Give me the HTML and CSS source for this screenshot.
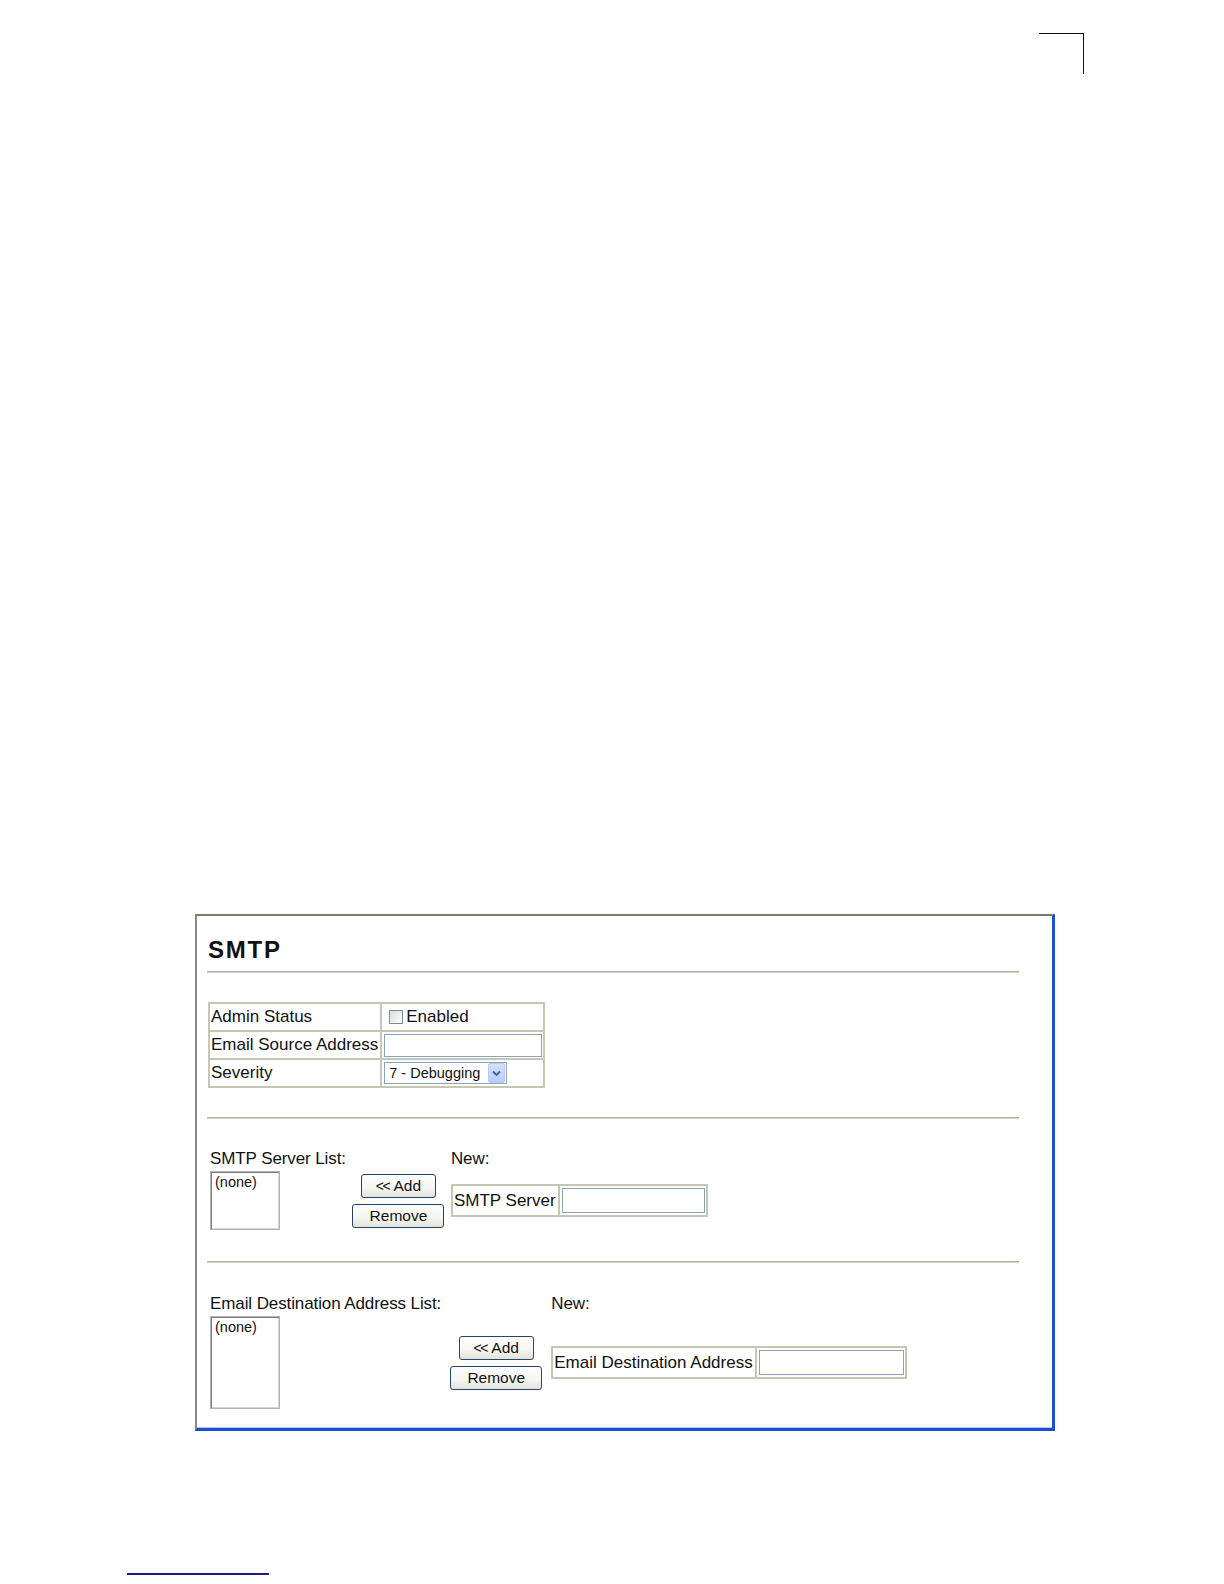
FILE: index.html
```html
<!DOCTYPE html>
<html>
<head>
<meta charset="utf-8">
<title>SMTP</title>
<link rel="stylesheet" href="styles.css">
</head>
<body>
<div class="page">
  <div class="crop-mark"></div>
  <div class="frame">
    <h1 class="title">SMTP</h1>
    <div class="rule"></div>
    <table class="grid settings">
      <tr>
        <td class="label">Admin Status</td>
        <td class="value value-wide"><span class="check"><span class="checkbox"></span>Enabled</span></td>
      </tr>
      <tr>
        <td class="label">Email Source Address</td>
        <td class="value value-wide"><input class="text-input source-input" type="text"></td>
      </tr>
      <tr>
        <td class="label">Severity</td>
        <td class="value value-wide">
          <div class="select">
            <span class="select-text">7 - Debugging</span>
            <span class="select-btn"><svg width="9" height="7" viewBox="0 0 9 7"><path d="M1 1.5 L4.5 5 L8 1.5" fill="none" stroke="#4d6185" stroke-width="1.8"/></svg></span>
          </div>
        </td>
      </tr>
    </table>
    <div class="rule"></div>
    <div class="list-section server">
      <div class="list-label">SMTP Server List:</div>
      <div class="spacer"></div>
      <div class="new-label">New:</div>
      <div class="listbox short">(none)</div>
      <div class="buttons">
        <button class="btn add" type="button"><span class="arrows">&lt;&lt;</span> Add</button>
        <button class="btn remove" type="button">Remove</button>
      </div>
      <table class="grid new-table">
        <tr>
          <td class="label">SMTP Server</td>
          <td class="value"><input class="text-input new-input" type="text"></td>
        </tr>
      </table>
    </div>
    <div class="rule"></div>
    <div class="list-section email">
      <div class="list-label">Email Destination Address List:</div>
      <div class="spacer"></div>
      <div class="new-label">New:</div>
      <div class="listbox tall">(none)</div>
      <div class="buttons">
        <button class="btn add" type="button"><span class="arrows">&lt;&lt;</span> Add</button>
        <button class="btn remove" type="button">Remove</button>
      </div>
      <table class="grid new-table">
        <tr>
          <td class="label">Email Destination Address</td>
          <td class="value"><input class="text-input new-input email-input" type="text"></td>
        </tr>
      </table>
    </div>
  </div>
  <div class="footer-line"></div>
</div>
</body>
</html>
```

FILE: styles.css
```css
html, body {
  margin: 0;
  padding: 0;
  background: #ffffff;
}

body {
  font-family: "Liberation Sans", Arial, sans-serif;
  color: #111111;
}

.page {
  width: 1224px;
  height: 1584px;
  padding-top: 33px;
  box-sizing: border-box;
  overflow: hidden;
}

.crop-mark {
  margin-left: 1039px;
  width: 44px;
  height: 40px;
  border-top: 1px solid #111;
  border-right: 1px solid #111;
}

.frame {
  margin-top: 840px;
  margin-left: 195px;
  box-sizing: content-box;
  padding: 0 0 19px 11px;
  width: 844px;
  border-top: 2px solid #7d7d6e;
  border-left: 2px solid #888888;
  border-right: 3px solid #1a4cd6;
  border-bottom: 3px solid #1a4cd6;
  box-shadow: inset 0 -1px 0 #b3c6f2;
}

.title {
  margin: 23px 0 0 0;
  font-size: 24px;
  line-height: 22px;
  letter-spacing: 1.8px;
  font-weight: bold;
  color: #111;
}

.rule {
  width: 812px;
  height: 1px;
  margin-left: -1px;
  border-top: 1px solid #b4b4a2;
  background: #d2d2c4;
}

.title + .rule {
  margin-top: 10px;
}

.grid {
  border-collapse: separate;
  border-spacing: 0;
  border: 1px solid #c6c6b4;
}

.grid td {
  border: 1px solid #c6c6b4;
  padding: 0 2px 0 1px;
  font-size: 17px;
  line-height: 20px;
  vertical-align: middle;
  white-space: nowrap;
}

.settings {
  margin: 29px 0 29px 0;
}

.settings td {
  height: 26px;
}

.value-wide {
  width: 158px;
}

.grid td.value {
  padding: 0 1px 0 0;
}

.check {
  display: flex;
  align-items: center;
}

.checkbox {
  display: inline-block;
  width: 12px;
  height: 12px;
  margin: 0 3px 0 7px;
  border: 1px solid #7c8c9c;
  background: linear-gradient(135deg, #dcdcd6 0%, #f4f4f2 70%, #ffffff 100%);
}

.text-input {
  display: block;
  box-sizing: border-box;
  margin: 0 0 0 2px;
  padding: 0;
  border: 1px solid #8aa4c0;
  background: #fff;
  font: inherit;
}

.source-input {
  width: 158px;
  height: 23px;
}

.select {
  display: flex;
  align-items: center;
  justify-content: space-between;
  box-sizing: border-box;
  width: 123px;
  height: 22px;
  margin-left: 2px;
  border: 1px solid #8aa4c0;
  padding: 0 1px 0 4px;
  background: #fff;
}

.select-text {
  font-size: 14.5px;
  line-height: 20px;
}

.select-btn {
  display: flex;
  align-items: center;
  justify-content: center;
  box-sizing: border-box;
  width: 17px;
  height: 20px;
  border: 1px solid #b9cbf6;
  border-radius: 2px;
  background: linear-gradient(#d3e0fd, #b8ccfb);
}

.list-section {
  display: grid;
  grid-template-columns: auto 105px auto;
  grid-template-rows: 20px auto;
  row-gap: 2px;
  align-items: center;
  justify-items: start;
  justify-content: start;
  margin-left: 1px;
  padding-top: 30px;
}

.list-section.server {
  padding-bottom: 31px;
}

.list-section.email {
  grid-template-columns: auto 110px auto;
  padding-top: 31px;
}

.list-label,
.new-label {
  font-size: 17px;
  line-height: 20px;
  white-space: nowrap;
  letter-spacing: -0.1px;
}

.list-label {
  padding-left: 1px;
}

.listbox {
  box-sizing: border-box;
  width: 70px;
  margin-left: 1px;
  padding: 1px 3px;
  border: 1px solid #b2b2b2;
  box-shadow: inset 1px 1px 0 #7e7e7e, inset -1px -1px 0 #d6d6d6;
  font-size: 14.5px;
  line-height: 16px;
  background: #fff;
}

.listbox.short {
  height: 59px;
  padding-left: 4px;
  padding-top: 2px;
}

.listbox.tall {
  height: 93px;
  padding-left: 4px;
  padding-top: 2px;
}

.buttons {
  justify-self: stretch;
  display: flex;
  flex-direction: column;
  align-items: center;
  gap: 6px;
}

.btn {
  box-sizing: border-box;
  height: 24px;
  padding: 0;
  border: 1px solid #27456c;
  border-radius: 3px;
  background: linear-gradient(#ffffff 0%, #f5f5f1 60%, #e4e2da 100%);
  font-family: "Liberation Sans", Arial, sans-serif;
  font-size: 15.5px;
  line-height: 20px;
  color: #111;
}

.btn.add {
  width: 75px;
}

.btn.remove {
  width: 92px;
}

.arrows {
  font-size: 14px;
  letter-spacing: -1.5px;
  margin-right: 1px;
}

.new-table td {
  height: 29px;
}

.new-input {
  width: 143px;
  height: 25px;
}

.email-input {
  width: 145px;
}

.footer-line {
  margin-top: 142px;
  margin-left: 127px;
  width: 142px;
  height: 2px;
  background: #1c1c8a;
}
```
